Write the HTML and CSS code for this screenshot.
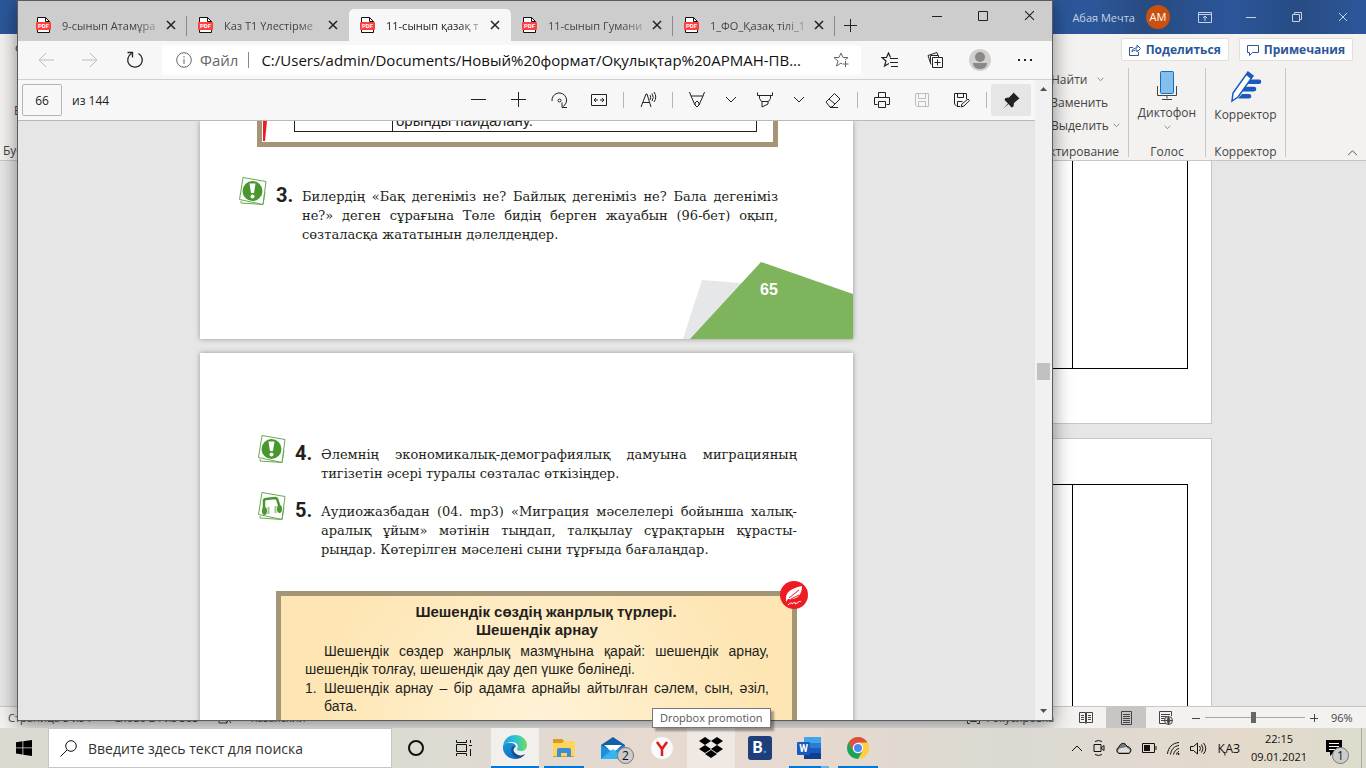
FILE: index.html
```html
<!DOCTYPE html>
<html lang="ru">
<head>
  <meta charset="utf-8">
  <title>11-сынып қазақ тілі</title>
  <link rel="stylesheet" href="styles.css">
</head>
<body>
  <!-- shared icons -->
  <svg class="sprite" aria-hidden="true">
    <symbol id="pdf" viewBox="0 0 15 16">
      <path d="M1.5 .5h8l4 4v11h-12z" fill="#fff" stroke="#111"/>
      <path d="M9.5 .5v4h4" fill="none" stroke="#111"/>
      <rect y="5" width="15" height="8" rx="1" fill="#ff3e3e" stroke="none"/>
      <text x="7.5" y="11.200" class="pdf-text">PDF</text>
    </symbol>
    <symbol id="close" viewBox="0 0 10 10"><path d="M1 1l8 8M9 1l-8 8"/></symbol>
    <symbol id="chevron" viewBox="0 0 12 8"><path d="M1 1l5 5 5-5"/></symbol>
    <symbol id="mark" viewBox="0 0 28 28">
      <path d="M4 .5l23 4-3 23-23.500-5z" fill="#fff" stroke="#6aa84f"/>
      <path d="M2 24v2l22 1.500 2-12" fill="none" stroke="#6aa84f"/>
      <circle cx="13.500" cy="14" r="10" fill="#4a962f"/>
      <path d="M10.500 6.500h6l-1.500 9.500h-3z" fill="#fff"/>
      <circle cx="13.500" cy="19.500" r="2" fill="#fff"/>
    </symbol>
    <symbol id="headphones" viewBox="0 0 28 28">
      <path d="M4 .5l23 4-3 23-23.500-5z" fill="#fff" stroke="#6aa84f"/>
      <path d="M2 24v2l22 1.500 2-12" fill="none" stroke="#6aa84f"/>
      <path d="M6 17V9q0-2 2-2l9-1q2 0 2.500 2l2 7" fill="none" stroke="#4a962f" stroke-width="2.500"/>
      <ellipse cx="6.500" cy="19" rx="2.500" ry="4" fill="#4a962f"/>
      <ellipse cx="21.500" cy="17" rx="2.500" ry="4" fill="#4a962f"/>
      <path d="M10.500 15v7M17.500 14v7" stroke="#9cc78a" stroke-width="2"/>
    </symbol>
  </svg>

  <main class="desktop">

    <!-- Word in the background -->
    <section class="word">
      <header class="word-title">
        <span class="user">Абая Мечта</span>
        <span class="user-badge">АМ</span>
        <button aria-label="Параметры ленты"><svg width="14" height="11" viewBox="0 0 14 11"><path d="M.5 .5h13v10H.5zM.5 2.500h13M7 9V4M5 6l2-2 2 2"/></svg></button>
        <button aria-label="Свернуть"><svg width="10" height="10" viewBox="0 0 10 10"><path d="M0 5.500h10"/></svg></button>
        <button aria-label="Окно"><svg width="10" height="10" viewBox="0 0 10 10"><path d="M.5 2.500h7v7h-7zM2.500 2.500v-2h7v7h-2"/></svg></button>
        <button aria-label="Закрыть"><svg width="10" height="10"><use href="#close"/></svg></button>
      </header>

      <div class="ribbon">
        <div class="ribbon-left">
          <span class="file-tab">Файл</span>
          <span class="paste">Вставить</span>
          <span class="clipboard">Буфер обмена</span>
        </div>
        <div class="ribbon-right">
          <div class="share-row">
            <button><svg width="12" height="12" viewBox="0 0 12 12"><path d="M4 3.500H.5v8h9V8M3 8c0-3 2-4 5-4V1l3.500 3.500L8 8V6C5 6 4 7 3 8z"/></svg>Поделиться</button>
            <button><svg width="12" height="12" viewBox="0 0 12 12"><path d="M.5 1.500h11v7h-6l-3 3v-3h-2z"/></svg>Примечания</button>
          </div>
          <div class="groups">
            <div class="group editing">
              <button>Найти <svg class="wide" width="7" height="5"><use href="#chevron"/></svg></button>
              <button>Заменить</button>
              <button>Выделить<svg width="7" height="5"><use href="#chevron"/></svg></button>
              <span class="group-name">Редактирование</span>
            </div>
            <div class="group voice">
              <button>
                <svg width="20" height="30" viewBox="0 0 20 30"><path d="M.5 15v9.500h19V15M10 24.500v3M5 28.500h10" fill="none" stroke="#444"/><rect x="3.500" y=".5" width="13" height="22" rx="1" fill="#83beec" stroke="#1071c4"/></svg>
                Диктофон
                <svg width="7" height="5"><use href="#chevron"/></svg>
              </button>
              <span class="group-name">Голос</span>
            </div>
            <div class="group corrector">
              <button>
                <svg width="32" height="32" viewBox="0 0 32 32"><path d="M20 8.500h9a2.300 2.300 0 0 1 0 4.600H16zM15 15.800h9a2.300 2.300 0 0 1 0 4.600H12zM12 23h7a2.300 2.300 0 0 1 0 4.600H8z" fill="#185abd" stroke="none"/><path d="M18 1l5 4L8 26l-6 4 1-8z" fill="#fff" stroke="#185abd" stroke-width="1.500"/><path d="M18 1l5 4-2 3-5-4z" fill="#185abd" stroke="none"/></svg>
                Корректор
              </button>
              <span class="group-name">Корректор</span>
            </div>
            <button class="collapse" aria-label="Свернуть ленту"><svg width="11" height="7" viewBox="0 0 12 8"><path d="M1 7l5-5 5 5"/></svg></button>
          </div>
        </div>
      </div>

      <div class="word-doc">
        <div class="word-page"><div class="word-grid grid-end"><div></div><div></div></div></div>
        <div class="word-page next"><div class="word-grid grid-start"><div></div><div></div></div></div>
      </div>

      <footer class="word-status">
        <span>Страница 5 из 7</span>
        <span>Слово 24 из 383</span>
        <svg width="14" height="12" viewBox="0 0 14 12"><path d="M1 1h8v10H1zM8 5l5 6M13 5l-5 6"/></svg>
        <span>Казахский</span>
        <span class="focus"><svg width="13" height="12" viewBox="0 0 13 12"><path d="M3 .5H.5v11H3M10 .5h2.500v11H10M3.500 3.500h6v6h-6z"/></svg>Фокусировка</span>
        <button aria-label="Режим чтения"><svg width="14" height="13" viewBox="0 0 14 13"><path d="M.5 1.500h6v10h-6zM7.500 1.500h6v10h-6zM2 4.500h3M2 6.500h3M2 8.500h3M9 4.500h3M9 6.500h3M9 8.500h3M7 1v12"/></svg></button>
        <button class="on" aria-label="Разметка страницы"><svg width="11" height="14" viewBox="0 0 11 14"><path d="M.5 .5h10v13H.5zM2 3.500h7M2 5.500h7M2 7.500h7M2 9.500h7M2 11.500h7"/></svg></button>
        <button aria-label="Веб-документ"><svg width="14" height="14" viewBox="0 0 14 14"><path d="M7 12.500H.5V.5h12V5M2 3.500h9M2 5.500h6M2 7.500h4M2 9.500h4"/><circle cx="9.500" cy="9.500" r="4" fill="#f3f2f1"/><path d="M5.500 9.500h8M9.500 5.500v8M9.500 5.500q-3 4 0 8q3-4 0-8"/></svg></button>
        <div class="zoom">
          <button aria-label="Уменьшить"><svg width="8" height="8" viewBox="0 0 8 8"><path d="M0 4.500h8"/></svg></button>
          <input type="range" min="0" max="100" value="48" aria-label="Масштаб">
          <button aria-label="Увеличить"><svg width="8" height="8" viewBox="0 0 8 8"><path d="M0 4.500h8M4.500 0v8"/></svg></button>
          <span>96%</span>
        </div>
      </footer>
    </section>

    <!-- Edge with the PDF -->
    <section class="edge">
      <header class="tabs">
        <div class="tab"><svg width="15" height="16"><use href="#pdf"/></svg><a href="#">9-сынып Атамұра</a><button aria-label="Закрыть вкладку"><svg width="10" height="10"><use href="#close"/></svg></button></div>
        <div class="tab no-line"><svg width="15" height="16"><use href="#pdf"/></svg><a href="#">Каз Т1 Үлестірме</a><button aria-label="Закрыть вкладку"><svg width="10" height="10"><use href="#close"/></svg></button></div>
        <div class="tab active"><svg width="15" height="16"><use href="#pdf"/></svg><a href="#">11-сынып қазақ т</a><button aria-label="Закрыть вкладку"><svg width="10" height="10"><use href="#close"/></svg></button></div>
        <div class="tab"><svg width="15" height="16"><use href="#pdf"/></svg><a href="#">11-сынып Гумани</a><button aria-label="Закрыть вкладку"><svg width="10" height="10"><use href="#close"/></svg></button></div>
        <div class="tab"><svg width="15" height="16"><use href="#pdf"/></svg><a href="#">1_ФО_Қазақ тілі_1</a><button aria-label="Закрыть вкладку"><svg width="10" height="10"><use href="#close"/></svg></button></div>
        <button class="new-tab" aria-label="Новая вкладка"><svg width="13" height="13" viewBox="0 0 13 13"><path d="M0 6.500h13M6.500 0v13"/></svg></button>
        <div class="caption">
          <button aria-label="Свернуть"><svg width="10" height="10" viewBox="0 0 10 10"><path d="M0 5.500h10"/></svg></button>
          <button aria-label="Развернуть"><svg width="10" height="10" viewBox="0 0 10 10"><path d="M.5 .5h9v9h-9z"/></svg></button>
          <button aria-label="Закрыть"><svg width="11" height="11"><use href="#close"/></svg></button>
        </div>
      </header>

      <nav class="nav">
        <button class="off" aria-label="Назад"><svg width="16" height="14" viewBox="0 0 16 14"><path d="M16 7H1M8 0L1 7l7 7"/></svg></button>
        <button class="off" aria-label="Вперёд"><svg width="16" height="14" viewBox="0 0 16 14"><path d="M0 7h15M8 0l7 7-7 7"/></svg></button>
        <button class="reload" aria-label="Обновить"><svg width="18" height="18" viewBox="0 0 18 18"><path d="M12.500 2.500a7.300 7.300 0 1 1-7 0M1.500 1.500h5v5" stroke-width="1.300"/></svg></button>
        <div class="address">
          <svg width="16" height="16" viewBox="0 0 16 16"><circle cx="8" cy="8" r="7.300"/><path d="M8 7v5M8 4v1.500"/></svg>
          <label for="url">Файл</label>
          <input id="url" type="text" value="C:/Users/admin/Documents/Новый%20формат/Оқулықтар%20АРМАН-ПВ...">
          <button aria-label="В избранное"><svg width="16" height="16" viewBox="0 0 16 16"><path d="M9 12l-1-1-4.500 3 1.500-5-4-3.500h5L8 1l2 4.500h5L12 8M12.500 9v6M9.500 12h6"/></svg></button>
        </div>
        <button aria-label="Избранное"><svg width="17" height="16" viewBox="0 0 17 16"><path d="M8 11.500l-4.500 2.500 1.500-5-4-3.500h4.500L7.500 1 9.500 5.500M9 6.500h8M9 10.500h8M10 14.500h7" stroke-width="1.200"/></svg></button>
        <button aria-label="Коллекции"><svg width="16" height="16" viewBox="0 0 16 16"><path d="M5.500 5.500h10v10h-10zM10.500 7.500v6M7.500 10.500h6M4 12.500L1 3.500l9-3 1 3M3.500 11V3.500h8v2"/></svg></button>
        <button aria-label="Профиль"><svg class="avatar" width="22" height="22" viewBox="0 0 22 22"><circle cx="11" cy="11" r="11" fill="#d2d0ce"/><circle cx="11" cy="8" r="5" fill="#8a8886"/><path d="M4 14h14q0 3-2 4.500-5 3-10 0Q4 17 4 14z" fill="#8a8886"/></svg></button>
        <button aria-label="Меню"><svg width="16" height="4" viewBox="0 0 16 4"><path d="M1 2h2M7 2h2M13 2h2" stroke-width="2"/></svg></button>
      </nav>

      <div class="content">
        <div class="viewer">
          <div class="pdf-bar">
            <input id="page" type="text" value="66">
            <label for="page">из 144</label>
            <div class="tools">
              <button aria-label="Уменьшить"><svg width="16" height="16" viewBox="0 0 16 16"><path d="M0 7.500h15"/></svg></button>
              <button aria-label="Увеличить"><svg width="16" height="16" viewBox="0 0 16 16"><path d="M0 7.500h15M7.500 0v15"/></svg></button>
              <button aria-label="Повернуть"><svg width="17" height="17" viewBox="0 0 17 17"><path d="M1 9A7.300 7.300 0 1 1 12 14.500M11 10.500v5h5"/><circle cx="8.500" cy="8.500" r="1.500"/></svg></button>
              <button aria-label="По ширине"><svg width="16" height="12" viewBox="0 0 16 12"><path d="M.5 .5h15v11H.5zM3 6h4M9 6h4M5 4L3 6l2 2M11 4l2 2-2 2"/></svg></button>
              <i></i>
              <button aria-label="Прочесть вслух"><svg width="17" height="16" viewBox="0 0 17 16"><path d="M1 15L6 2h1l4 13M2.500 10.500H9.500M10 3q1.500 2 0 5M12 1.500q2.500 4 0 7.500M14 0q3.500 5 0 10"/></svg></button>
              <i></i>
              <button aria-label="Рисование"><svg width="16" height="16" viewBox="0 0 16 16"><path d="M.5 0l1.500 4h12L15.500 0M2 4l4 9 2 2 2-2 4-9M6 13v-2l2-2 2 2v2"/></svg></button>
              <button class="small" aria-label="Цвет пера"><svg width="12" height="8"><use href="#chevron"/></svg></button>
              <button aria-label="Выделение"><svg width="16" height="16" viewBox="0 0 16 16"><path d="M.5 .5v3h15v-3M2.500 3.500v3l2 3h7l2-3v-3M5 9.500V15l6-3V9.500"/></svg></button>
              <button class="small" aria-label="Цвет маркера"><svg width="12" height="8"><use href="#chevron"/></svg></button>
              <button aria-label="Ластик"><svg width="16" height="15" viewBox="0 0 16 15"><path d="M1 9L9.500 .500 15 6l-8 8H5zM4 6l6 5M5 14.500h8"/></svg></button>
              <i></i>
              <button aria-label="Печать"><svg width="16" height="16" viewBox="0 0 16 16"><path d="M4.500 5V.5h7V5M3.500 12.500h-3v-7h15v7h-3M4.500 9.500h7v6h-7z"/></svg></button>
              <button class="off" aria-label="Сохранить"><svg width="14" height="14" viewBox="0 0 14 14"><path d="M.5 .5h13v13H2l-1.500-1.500zM3.500 .5v5h7v-5M3.500 13V8.500h7V13"/></svg></button>
              <button aria-label="Сохранить как"><svg width="16" height="15" viewBox="0 0 16 15"><path d="M6 13.500H3L.5 11V.5h12V6M3.500 .5v4h6v-4M3.500 13V8.500h5M7 14l1-3 6-5 1.500 1.500-5.500 5.500z"/></svg></button>
              <i></i>
              <button class="pin" aria-label="Закрепить"><svg width="17" height="17" viewBox="0 0 17 17"><path d="M10.500 .5l6 6-1.500 1-4 3.500-.5 3.500-2 1-3-3.500L.5 16.500 5 11.500 1.500 8l1-2 3.500-.5L9.500 2z" fill="#222" stroke="none"/></svg></button>
            </div>
          </div>

          <div class="pages">
            <article class="page page-65">
              <div class="rule-box">
                <svg class="red-edge" width="6" height="22" viewBox="0 0 6 22"><path d="M0 0h4L2 20H0z" fill="#ed1c24"/></svg>
                <table><tr><td></td><td>орынды пайдалану.</td></tr></table>
              </div>
              <div class="task">
                <svg width="28" height="28"><use href="#mark"/></svg>
                <b>3.</b>
                <p>
                  <span>Билердің «Бақ дегеніміз не? Байлық дегеніміз не? Бала дегеніміз</span>
                  <span>не?» деген сұрағына Төле бидің берген жауабын (96-бет) оқып,</span>
                  <span class="last">сөзталасқа жататынын дәлелдеңдер.</span>
                </p>
              </div>
              <div class="corner">
                <svg width="170" height="78" viewBox="0 0 170 78"><path d="M0 78L19 19l50 4-30 55z" fill="#e6e7e8"/><path d="M7 78L78 1l92 32v45z" fill="#7eb45b"/></svg>
                <span>65</span>
              </div>
            </article>

            <article class="page page-66">
              <div class="task">
                <svg width="28" height="28"><use href="#mark"/></svg>
                <b>4.</b>
                <p>
                  <span>Әлемнің экономикалық-демографиялық дамуына миграцияның</span>
                  <span class="last">тигізетін әсері туралы сөзталас өткізіңдер.</span>
                </p>
              </div>
              <div class="task">
                <svg width="28" height="28"><use href="#headphones"/></svg>
                <b>5.</b>
                <p>
                  <span>Аудиожазбадан (04. mp3) «Миграция мәселелері бойынша халық-</span>
                  <span>аралық ұйым» мәтінін тыңдап, талқылау сұрақтарын құрасты-</span>
                  <span class="last">рыңдар. Көтерілген мәселені сыни тұрғыда бағалаңдар.</span>
                </p>
              </div>
              <div class="theory">
                <svg class="quill" width="28" height="28" viewBox="0 0 28 28"><circle cx="14" cy="14" r="14" fill="#ed1c24"/><path d="M6 19C5 11 12 7 22 5c0 9-5 14-14 13l-2 3z" fill="#fff"/><path d="M9 17L19 9M11 18l8-4" stroke="#ed1c24"/><path d="M8 24c3-3 4-2 4-1 3-3 4-1 3 0 3-1 5-4 6-2" fill="none" stroke="#fff"/></svg>
                <h2>Шешендік сөздің жанрлық түрлері.<br>Шешендік арнау</h2>
                <p>
                  <span class="indent">Шешендік сөздер жанрлық мазмұнына қарай: шешендік арнау,</span>
                  <span class="last">шешендік толғау, шешендік дау деп үшке бөлінеді.</span>
                </p>
                <ol>
                  <li><div><span>Шешендік арнау – бір адамға арнайы айтылған сәлем, сын, әзіл,</span><span class="last">бата.</span></div></li>
                </ol>
              </div>
            </article>
          </div>
        </div>

        <div class="scrollbar">
          <svg width="7" height="4" viewBox="0 0 7 4"><path d="M0 4l3.500-4L7 4z"/></svg>
          <div class="thumb"></div>
          <svg width="7" height="4" viewBox="0 0 7 4"><path d="M0 0l3.500 4L7 0z"/></svg>
        </div>
      </div>
    </section>
  </main>

  <footer class="taskbar">
    <button class="start" aria-label="Пуск"><svg width="16" height="16" viewBox="0 0 16 16"><path d="M0 2.200L6.500 1.300V7.500H0zM7.300 1.200L16 0v7.500H7.300zM0 8.300h6.500v6.200L0 13.600zM7.300 8.300H16V16l-8.700-1.200z"/></svg></button>
    <label class="search">
      <svg width="17" height="17" viewBox="0 0 17 17"><circle cx="11" cy="6" r="5.300"/><path d="M7 10L.5 16.500"/></svg>
      <input type="text" placeholder="Введите здесь текст для поиска">
    </label>
    <button class="plain" aria-label="Кортана"><svg width="16" height="16" viewBox="0 0 16 16"><circle cx="8" cy="8" r="7" fill="none" stroke="#111" stroke-width="2"/></svg></button>
    <button class="plain" aria-label="Представление задач"><svg width="16" height="16" viewBox="0 0 16 16"><path d="M.5 0v2.500h10V0M.5 4.500h10v7H.5zM.5 16v-2.500h10V16M14.500 0v3M14.500 9v7M13 5.500h3" fill="none" stroke="#111"/></svg></button>

    <div class="apps">
      <button class="app current" aria-label="Edge">
        <svg width="24" height="24" viewBox="0 0 24 24">
          <defs>
            <linearGradient id="edge-top" x1="0" x2="1"><stop offset="0" stop-color="#249fe0"/><stop offset=".5" stop-color="#2bc3d2"/><stop offset="1" stop-color="#6fdc5c"/></linearGradient>
            <linearGradient id="edge-low" x1="0" x2="1" y2="1"><stop offset="0" stop-color="#1b9de2"/><stop offset="1" stop-color="#0c5ab0"/></linearGradient>
          </defs>
          <path d="M0 11C1 4 6 0 12 0c7 0 12 5 12 10 0 4-3 6-6 6-3 0-5-1-4-2 2-3 0-7-5-7-4 0-7 1-9 4z" fill="url(#edge-top)"/>
          <path d="M0 11c1-3 5-4 8-3 3 0 5 2 5 4-4 0-5 4-2 7s8 3 11 0c-2 3-6 5-10 5C5 24-1 18 0 11z" fill="url(#edge-low)"/>
          <path d="M9 12c-2 5 1 10 6 11 3 0 6-2 7-4-3 2-7 2-10-1-2-2-2-4 0-6-1-1-2-1-3 0z" fill="#124f94"/>
        </svg>
      </button>
      <button class="app open" aria-label="Проводник"><svg width="22" height="20" viewBox="0 0 22 20"><path d="M0 1h9l2 2h10v16H0z" fill="#dd9b1b"/><path d="M0 5h9l2-2h11v15H0z" fill="#ffd45e"/><path d="M4 19v-7q0-2 2-2h10q2 0 2 2v7h-4v-4H8v4z" fill="#3c8fd4"/></svg></button>
      <button class="app" aria-label="Почта"><svg width="24" height="24" viewBox="0 0 24 24"><path d="M0 9l12-8 12 8v4H0z" fill="#155ea8"/><path d="M3 9h18l-9 8z" fill="#fff"/><path d="M0 9l12 7 12-7v14H0z" fill="#1b92e0"/><path d="M0 23L12 13l12 10z" fill="#35b5f2"/></svg><span class="badge">2</span></button>
      <button class="app" aria-label="Яндекс"><svg width="24" height="24" viewBox="0 0 24 24"><circle cx="12" cy="12" r="11.500" fill="#fafafa" stroke="#ddd"/><path d="M7 6l5 7 5-7M12 13v7" fill="none" stroke="#e01b1b" stroke-width="2.500"/></svg></button>
      <button class="app hover" aria-label="Dropbox"><svg width="24" height="22" viewBox="0 0 24 22"><path d="M6 0l6 4-6 4-6-4zM18 0l6 4-6 4-6-4zM6 8l6 4-6 4-6-4zM18 8l6 4-6 4-6-4zM12 13l6 4-6 4-6-4z"/></svg><span class="tooltip">Dropbox promotion</span></button>
      <button class="app" aria-label="Booking"><span class="booking">B<em>.</em></span></button>
      <button class="app open double" aria-label="Word"><svg width="24" height="22" viewBox="0 0 24 22"><path fill="#41a5ee" d="M7 0h17v6H7z"/><path fill="#2b7cd3" d="M7 6h17v5H7z"/><path fill="#185abd" d="M7 11h17v5H7z"/><path fill="#103f91" d="M7 16h17v6H7z"/><rect y="5" width="13" height="13" rx="1" fill="#185abd"/><text x="6.500" y="15" class="word-letter">W</text></svg></button>
      <button class="app open" aria-label="Chrome"><svg width="22" height="22" viewBox="0 0 22 22"><circle cx="11" cy="11" r="11" fill="#ffcd40"/><path d="M1.500 5.500A11 11 0 0 1 20.500 5.500H11L6.300 13.700z" fill="#dd4f43"/><path d="M1.500 5.500A11 11 0 0 0 11 22L15.700 13.700 11 16 6.300 13.700z" fill="#1aa261"/><circle cx="11" cy="11" r="5.200" fill="#fff"/><circle cx="11" cy="11" r="4" fill="#4a8af4"/></svg></button>
    </div>

    <div class="tray">
      <svg width="12" height="8" viewBox="0 0 12 8"><path d="M1 7l5-5 5 5"/></svg>
      <svg width="12" height="16" viewBox="0 0 12 16"><path d="M2 1.500q3.500-2 7 0M2 14.500q3.500 2 7 0M1 4.500h7v7H1zM8 8l3-2.500v5z"/></svg>
      <svg width="17" height="12" viewBox="0 0 17 12"><path d="M4 11.500a3.500 3.500 0 0 1 0-6.500C5 1 10-.5 12 4.500c5 0 5 7 1 7z" fill="#777"/><path d="M3 10q0-4 4-4l4-1 4 3-1 2.500H4z" fill="#ddd" stroke="none"/></svg>
      <svg width="15" height="10" viewBox="0 0 15 10"><path d="M.5 .5h12v9H.5zM14 3v4"/><path d="M2 2h6v6H2z" fill="#111" stroke="none"/></svg>
      <svg width="13" height="13" viewBox="0 0 13 13"><path d="M.5 12C1 6 5 1 12 .5M3.500 12.500C4 8 7 4 12 3.500M6.500 12.500C7 10 9 7 12 6.500M9.500 12.500c0-1 1-3 2.500-3" /><circle cx="11.500" cy="12" r="1" fill="#111" stroke="none"/></svg>
      <svg width="17" height="13" viewBox="0 0 17 13"><path d="M.5 4.500h3l4-3.500v11l-4-3.500h-3zM9.500 4q2 2.500 0 5M11.500 2.500q3 4 0 8M13.500 1q4.500 5.500 0 11"/></svg>
      <span class="lang">ҚАЗ</span>
      <time class="clock">22:15<br>09.01.2021</time>
      <button class="notice" aria-label="Уведомления"><svg width="16" height="16" viewBox="0 0 16 16"><path d="M0 0h16v12H8l-4 4v-4H0z" fill="#000" stroke="none"/><path d="M3 3.500h10M3 6.500h10M3 9.500h6" stroke="#fff"/></svg><span class="badge">1</span></button>
    </div>
  </footer>
</body>
</html>
```
FILE: styles.css
```css
* {
  box-sizing: border-box;
}

body {
  margin: 0;
  height: 100vh;
  display: flex;
  flex-direction: column;
  overflow: hidden;
  font-family: "Open Sans", "Noto Sans", sans-serif;
  font-size: 12px;
  color: #333;
}

button {
  display: flex;
  align-items: center;
  justify-content: center;
  padding: 0;
  border: none;
  background: none;
  font: inherit;
  color: inherit;
  flex-shrink: 0;
}

input {
  font: inherit;
  color: inherit;
  min-width: 0;
  outline: none;
}

svg {
  fill: none;
  stroke: currentColor;
  flex-shrink: 0;
}

.sprite {
  position: absolute;
  width: 0;
  height: 0;
}

.pdf-text {
  font: bold 6px Roboto, sans-serif;
  fill: #fff;
  stroke: none;
  text-anchor: middle;
}

.desktop {
  flex: 1;
  min-height: 0;
  position: relative;
}

/* ---------- Word ---------- */

.word {
  height: 100%;
  display: flex;
  flex-direction: column;
  background: #e6e6e6;
}

.word-title {
  height: 34px;
  display: flex;
  align-items: center;
  justify-content: flex-end;
  background: linear-gradient(90deg, #2b579a 80%, #284b80 84%, #2b569a 90%, #284c84 95%, #2b579a);
  color: #c5d1e6;
}

.word-title button {
  width: 46px;
  height: 34px;
}

.user {
  font-size: 11px;
}

.user-badge {
  width: 24px;
  height: 24px;
  margin: 0 12px 0 11px;
  border-radius: 50%;
  background: #ca5010;
  color: #fff;
  font-size: 11px;
  line-height: 24px;
  text-align: center;
}

.ribbon {
  height: 127px;
  display: flex;
  justify-content: space-between;
  background: #f3f2f1;
  border-bottom: 1px solid #c8c6c4;
  color: #444;
}

.ribbon-left {
  display: flex;
  flex-direction: column;
  padding: 7px 0 0 3px;
  line-height: 16px;
}

.file-tab {
  padding-left: 12px;
}

.paste {
  padding: 46px 0 24px 11px;
}

.ribbon-right {
  width: 360px;
  display: flex;
  flex-direction: column;
}

.share-row {
  display: flex;
  justify-content: flex-end;
  gap: 10px;
  padding: 4px 13px 7px 0;
}

.share-row button {
  height: 23px;
  gap: 5px;
  padding: 0 7px;
  background: #fff;
  border: 1px solid #e1dfdd;
  border-radius: 2px;
  color: #2b579a;
  font-weight: bold;
}

.groups {
  flex: 1;
  display: flex;
  margin-bottom: 3px;
}

.group {
  display: flex;
  flex-direction: column;
  align-items: center;
  border-right: 1px solid #c8c6c4;
}

.group-name {
  margin-top: auto;
  line-height: 10px;
}

.editing {
  width: 123px;
  align-items: flex-start;
  padding-left: 45px;
}

.editing button {
  height: 23px;
  gap: 4px;
}

.editing .wide {
  margin-left: 6px;
}

.editing .group-name {
  margin-left: -29px;
}

.voice {
  width: 77px;
}

.corrector {
  width: 80px;
}

.voice button,
.corrector button {
  flex-direction: column;
  gap: 4px;
  padding-top: 3px;
  line-height: 16px;
}

.collapse {
  margin: auto 8px 0 auto;
  height: 10px;
}

.word-doc {
  flex: 1;
  min-height: 0;
  display: flex;
  flex-direction: column;
  align-items: flex-end;
  padding-right: 154px;
}

.word-page {
  width: 760px;
  height: 263px;
  flex-shrink: 0;
  padding-right: 23px;
  background: #fff;
  border: 1px solid #c6c6c6;
  border-top: none;
}

.word-page.next {
  flex: 1;
  margin-top: 14px;
  padding-top: 45px;
  border-top: 1px solid #c6c6c6;
  border-bottom: none;
}

.word-grid {
  height: 100%;
  display: grid;
  grid-template-columns: 1fr 115px;
}

.word-grid div {
  border: solid #000;
  border-width: 0 1px 0 0;
}

.grid-end {
  height: 208px;
  border-bottom: 1px solid #000;
}

.grid-start {
  border-top: 1px solid #000;
}

.word-status {
  height: 22px;
  display: flex;
  align-items: center;
  padding-left: 8px;
  background: #f3f2f1;
  border-top: 1px solid #c8c6c4;
  font-size: 11px;
  color: #444;
}

.word-status > span {
  margin-right: 20px;
}

.word-status > svg {
  margin-right: 18px;
}

.word-status > button {
  width: 40px;
  height: 21px;
}

.word-status .on {
  background: #c8c6c4;
}

.word-status .focus {
  display: flex;
  align-items: center;
  gap: 4px;
  margin: 0 12px 0 auto;
}

.zoom {
  width: 180px;
  display: flex;
  align-items: center;
  padding-left: 6px;
}

.zoom input {
  appearance: none;
  width: 100px;
  height: 1px;
  margin: 0 5px;
  background: #a8a6a4;
}

.zoom input::-webkit-slider-thumb {
  appearance: none;
  width: 5px;
  height: 11px;
  background: #666;
}

.zoom span {
  margin-left: 13px;
}

/* ---------- Edge window ---------- */

.edge {
  position: absolute;
  top: 0;
  left: 17px;
  right: 313px;
  bottom: 7px;
  display: flex;
  flex-direction: column;
  border: 1px solid #5c5c5c;
  background: #f7f7f7;
  box-shadow: 0 4px 18px rgba(0, 0, 0, 0.45);
  color: #222;
}

.tabs {
  height: 40px;
  display: flex;
  align-items: flex-end;
  padding-left: 7px;
  background: #cdcdcd;
}

.tab {
  width: 162px;
  height: 32px;
  display: flex;
  align-items: center;
  padding-left: 11px;
  position: relative;
}

.tab::after {
  content: "";
  position: absolute;
  right: 0;
  top: 7px;
  width: 1px;
  height: 20px;
  background: #8a8a8a;
}

.tab.no-line::after,
.tab.active::after {
  display: none;
}

.tab.active {
  background: #f7f7f7;
  border-radius: 5px 5px 0 0;
}

.tab a {
  width: 98px;
  margin: 0 6px 0 11px;
  white-space: nowrap;
  text-decoration: none;
  font-size: 11px;
  color: #444;
  mask-image: linear-gradient(90deg, #000 75%, rgba(0, 0, 0, 0.2));
}

.tab.active a {
  color: #222;
}

.tab button svg {
  stroke-width: 1.5;
}

.new-tab {
  width: 30px;
  height: 32px;
}

.caption {
  display: flex;
  align-self: flex-start;
  margin-left: auto;
}

.caption button {
  width: 46px;
  height: 29px;
}

.nav {
  height: 39px;
  display: flex;
  align-items: center;
  padding: 0 5px 0 6px;
  border-bottom: 1px solid #d0d0d0;
}

.nav > button {
  width: 45px;
  height: 36px;
}

.nav > .off {
  width: 44px;
}

.nav .off,
.tools .off {
  color: #bdbdbd;
}

.nav > .reload {
  margin-right: 5px;
}

.address {
  flex: 1;
  min-width: 0;
  height: 30px;
  display: flex;
  align-items: center;
  padding: 0 12px 0 14px;
  margin-right: 6px;
  background: #fff;
  border-radius: 4px;
  font-size: 15px;
}

.address > svg {
  color: #666;
}

.address label {
  margin: 0 12px 0 8px;
  padding-right: 10px;
  border-right: 1px solid #888;
  line-height: 16px;
  color: #666;
}

.address input {
  flex: 1;
  padding: 0;
  border: none;
  background: none;
  color: #111;
}

.address button {
  color: #666;
}

.avatar {
  stroke: none;
}

.content {
  flex: 1;
  min-height: 0;
  display: flex;
}

.viewer {
  flex: 1;
  min-width: 0;
  display: flex;
  flex-direction: column;
  background: #e6e6e6;
}

.pdf-bar {
  height: 41px;
  display: flex;
  align-items: center;
  padding: 0 4px;
  background: #f7f7f7;
  border-bottom: 1px solid #b9b9b9;
}

.pdf-bar input {
  width: 40px;
  height: 32px;
  margin-right: 10px;
  padding: 0;
  border: 1px solid #b5b5b5;
  border-radius: 2px;
  background: #f7f7f7;
  text-align: center;
}

.tools {
  display: flex;
  align-items: center;
  margin-left: auto;
}

.tools button {
  width: 40px;
  height: 32px;
}

.tools .small {
  width: 28px;
}

.tools .pin {
  background: #e6e6e6;
  border-radius: 2px;
}

.tools i {
  width: 1px;
  height: 16px;
  margin: 0 4px;
  background: #b5b5b5;
}

.scrollbar {
  width: 17px;
  display: flex;
  flex-direction: column;
  align-items: center;
  padding: 7px 0;
  background: #f1f1f1;
}

.scrollbar svg {
  fill: #505050;
  stroke: none;
}

.thumb {
  width: 13px;
  height: 17px;
  margin: 272px 0 auto;
  background: #c1c1c1;
}

/* ---------- PDF pages ---------- */

.pages {
  flex: 1;
  min-height: 0;
  display: flex;
  flex-direction: column;
  align-items: center;
  gap: 14px;
  overflow: hidden;
}

.page {
  width: 653px;
  flex-shrink: 0;
  position: relative;
  background: #fff;
  box-shadow: 0 0 5px rgba(0, 0, 0, 0.35);
  color: #231f20;
}

.page-65 {
  height: 218px;
  padding: 0 75px 0 39px;
}

.page-66 {
  padding: 82px 56px 0 58px;
}

.rule-box {
  display: flow-root;
  position: relative;
  height: 26px;
  margin-left: 18px;
  padding: 0 16px 0 32px;
  border: 5px solid #a59577;
  border-top: none;
}

.red-edge {
  position: absolute;
  left: 1px;
  top: 0;
  stroke: none;
}

.rule-box table {
  width: 100%;
  margin-top: -10px;
  border-collapse: collapse;
  table-layout: fixed;
  font: 15px/18px "Liberation Sans", Arial, sans-serif;
}

.rule-box td {
  height: 20px;
  padding: 0 3px;
  border: 1px solid #231f20;
  vertical-align: top;
}

.rule-box td:first-child {
  width: 98px;
}

.task {
  display: flex;
  margin-top: 9px;
}

.page-65 .task {
  margin-top: 30px;
}

.page-66 .task:first-child {
  margin-top: 0;
}

.task svg {
  stroke: none;
}

.task b {
  width: 26px;
  margin: 6px 0 0 9px;
  font: bold 20px/24px Roboto, sans-serif;
}

.task p {
  flex: 1;
  margin: 10px 0 0;
  font: 13px/19px "DejaVu Serif", serif;
}

.page p span,
.page li span {
  display: block;
  white-space: nowrap;
  text-align: justify;
  text-align-last: justify;
}

.page p .last,
.page li .last {
  text-align-last: left;
}

.corner {
  position: absolute;
  right: 0;
  bottom: 0;
  height: 78px;
}

.corner svg {
  stroke: none;
}

.corner span {
  position: absolute;
  left: 77px;
  top: 19px;
  font: bold 16px/20px "Liberation Sans", Arial, sans-serif;
  color: #fff;
}

.theory {
  position: relative;
  height: 150px;
  margin: 32px 0 0 18px;
  padding: 7px 23px 0 24px;
  border: 5px solid #a59577;
  background: radial-gradient(circle at 50% 100%, #fff3d8, #fee6b4 75%);
  font: 14px/18px "Liberation Sans", Arial, sans-serif;
}

.quill {
  position: absolute;
  right: -16px;
  top: -15px;
  stroke: none;
}

.theory h2 {
  margin: 0;
  font-size: 15px;
  line-height: 18px;
  text-align: center;
  text-indent: 18px;
}

.theory p {
  margin: 3px 0 1px;
}

.theory .indent {
  padding-left: 19px;
}

.theory ol {
  margin: 0;
  padding: 0;
}

.theory li {
  display: flex;
  counter-increment: item;
}

.theory li::before {
  content: counter(item) ".";
  width: 19px;
}

.theory li div {
  flex: 1;
}

/* ---------- Taskbar ---------- */

.taskbar {
  height: 40px;
  display: flex;
  background: linear-gradient(90deg, #dbd9d0, #dcdbd2 30%, #e6d9d0 48%, #e6d9cf 60%, #dadad2 74%, #e2d9d0 84%, #e3dacb 92%, #dcdccd);
  position: relative;
  color: #111;
}

.taskbar button {
  width: 48px;
}

.start svg,
.hover svg {
  fill: #000;
  stroke: none;
}

.search {
  width: 344px;
  display: flex;
  align-items: center;
  gap: 11px;
  padding: 0 11px;
  border: 1px solid #c6c6c8;
  background: #fff;
  font-size: 14px;
}

.search input {
  flex: 1;
  padding: 0;
  border: none;
  background: none;
}

.search input::placeholder {
  color: #333;
}

.apps {
  display: flex;
  gap: 1px;
  margin-left: 3px;
}

.app {
  position: relative;
}

.app svg {
  stroke: none;
}

.app.current {
  background: #f2f0ed;
  border-bottom: 2px solid #0078d7;
}

.app.open::after {
  content: "";
  position: absolute;
  left: 4px;
  bottom: 0;
  width: 40px;
  height: 2px;
  background: #0078d7;
}

.app.double::after {
  background: linear-gradient(90deg, #0078d7 80%, #6cb2ea 80%);
}

.app.hover {
  background: #f0e8e3;
}

.badge {
  position: absolute;
  right: 3px;
  bottom: 4px;
  width: 17px;
  height: 17px;
  border: 1px solid #777;
  border-radius: 50%;
  background: #ccc;
  font-size: 12px;
  line-height: 15px;
  text-align: center;
}

.tooltip {
  position: absolute;
  left: -35px;
  bottom: 40px;
  height: 20px;
  padding: 0 7px;
  border: 1px solid #767676;
  background: #fff;
  box-shadow: 3px 3px 2px rgba(0, 0, 0, 0.35);
  font-size: 11px;
  line-height: 18px;
  white-space: nowrap;
  color: #575757;
}

.booking {
  width: 24px;
  height: 24px;
  border-radius: 3px;
  background: #1f3f7a;
  color: #fff;
  font: bold 16px/24px Roboto, sans-serif;
}

.booking em {
  font-style: normal;
  color: #12a5e8;
}

.word-letter {
  font: bold 10px Roboto, sans-serif;
  fill: #fff;
  text-anchor: middle;
}

.tray {
  display: flex;
  align-items: center;
  gap: 10px;
  margin-left: auto;
  padding-right: 4px;
}

.clock {
  width: 58px;
  font-size: 11px;
  line-height: 18px;
  text-align: center;
}

.taskbar .notice {
  position: relative;
  width: 56px;
  height: 40px;
  margin-left: -12px;
  border-right: 1px solid #aaa;
}

.notice .badge {
  right: 12px;
}
```
